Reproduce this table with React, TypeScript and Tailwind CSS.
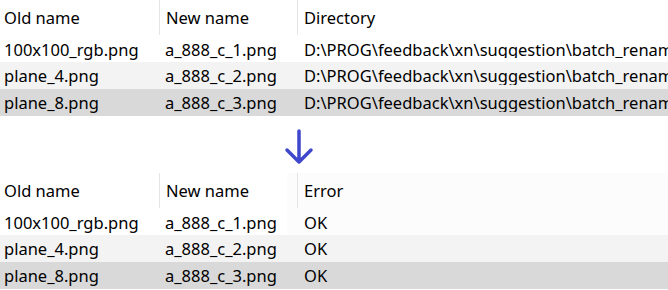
import React from "react";

const before = [
  ["100x100_rgb.png", "a_888_c_1.png", "D:\\PROG\\feedback\\xn\\suggestion\\batch_rename"],
  ["plane_4.png", "a_888_c_2.png", "D:\\PROG\\feedback\\xn\\suggestion\\batch_rename"],
  ["plane_8.png", "a_888_c_3.png", "D:\\PROG\\feedback\\xn\\suggestion\\batch_rename"],
];

const after = [
  ["100x100_rgb.png", "a_888_c_1.png", "OK"],
  ["plane_4.png", "a_888_c_2.png", "OK"],
  ["plane_8.png", "a_888_c_3.png", "OK"],
];

const rowBg = ["", "bg-[#f3f3f3]", "bg-[#d9d9d9]"];
const rowH = ["h-[26px]", "h-[27px]", "h-[27px]"];

const Table = ({ third, rows, faint }: { third: string; rows: string[][]; faint?: boolean }) => {
  const tint = faint ? "bg-[linear-gradient(to_right,#ffffff_287px,#fcfcfc_287px)]" : "";
  return (
    <div>
      <div className={`flex h-[36px] ${tint}`}>
        <div className="w-[160px] flex items-center pl-[4px] pt-[2px] border-r border-[#e5e5e5] h-[35px]">Old name</div>
        <div className="w-[138px] flex items-center pl-[6px] pt-[2px] border-r border-[#e5e5e5] h-[35px]">New name</div>
        <div className="flex-1 flex items-center pl-[6px] pt-[2px] h-[35px]">{third}</div>
      </div>
      {rows.map((r, i) => (
        <div key={i} className={`flex items-center pt-[2px] ${rowH[i]} ${rowBg[i]} ${i === 0 ? tint : ""}`}>
          <div className="w-[160px] pl-[4px] whitespace-nowrap">{r[0]}</div>
          <div className="w-[138px] pl-[5px] whitespace-nowrap">{r[1]}</div>
          <div className="flex-1 min-w-0 pl-[6px] whitespace-nowrap overflow-hidden">{r[2]}</div>
        </div>
      ))}
    </div>
  );
};

export default function App() {
  return (
    <div
      className="w-[668px] h-[290px] overflow-hidden bg-white text-black text-[16.5px] leading-none"
      style={{ fontFamily: '"Noto Sans", "Open Sans", sans-serif' }}
    >
      <Table third="Directory" rows={before} />
      <div className="h-[57px] pl-[284px] pt-[12px]">
        <svg width="30" height="38" viewBox="0 0 30 38" fill="none">
          <path
            d="M15 3 V34 M3 22 L15 34 L27 22"
            stroke="#3f48cc"
            strokeWidth="3.5"
            strokeLinecap="round"
            strokeLinejoin="round"
          />
        </svg>
      </div>
      <Table third="Error" rows={after} faint />
    </div>
  );
}
